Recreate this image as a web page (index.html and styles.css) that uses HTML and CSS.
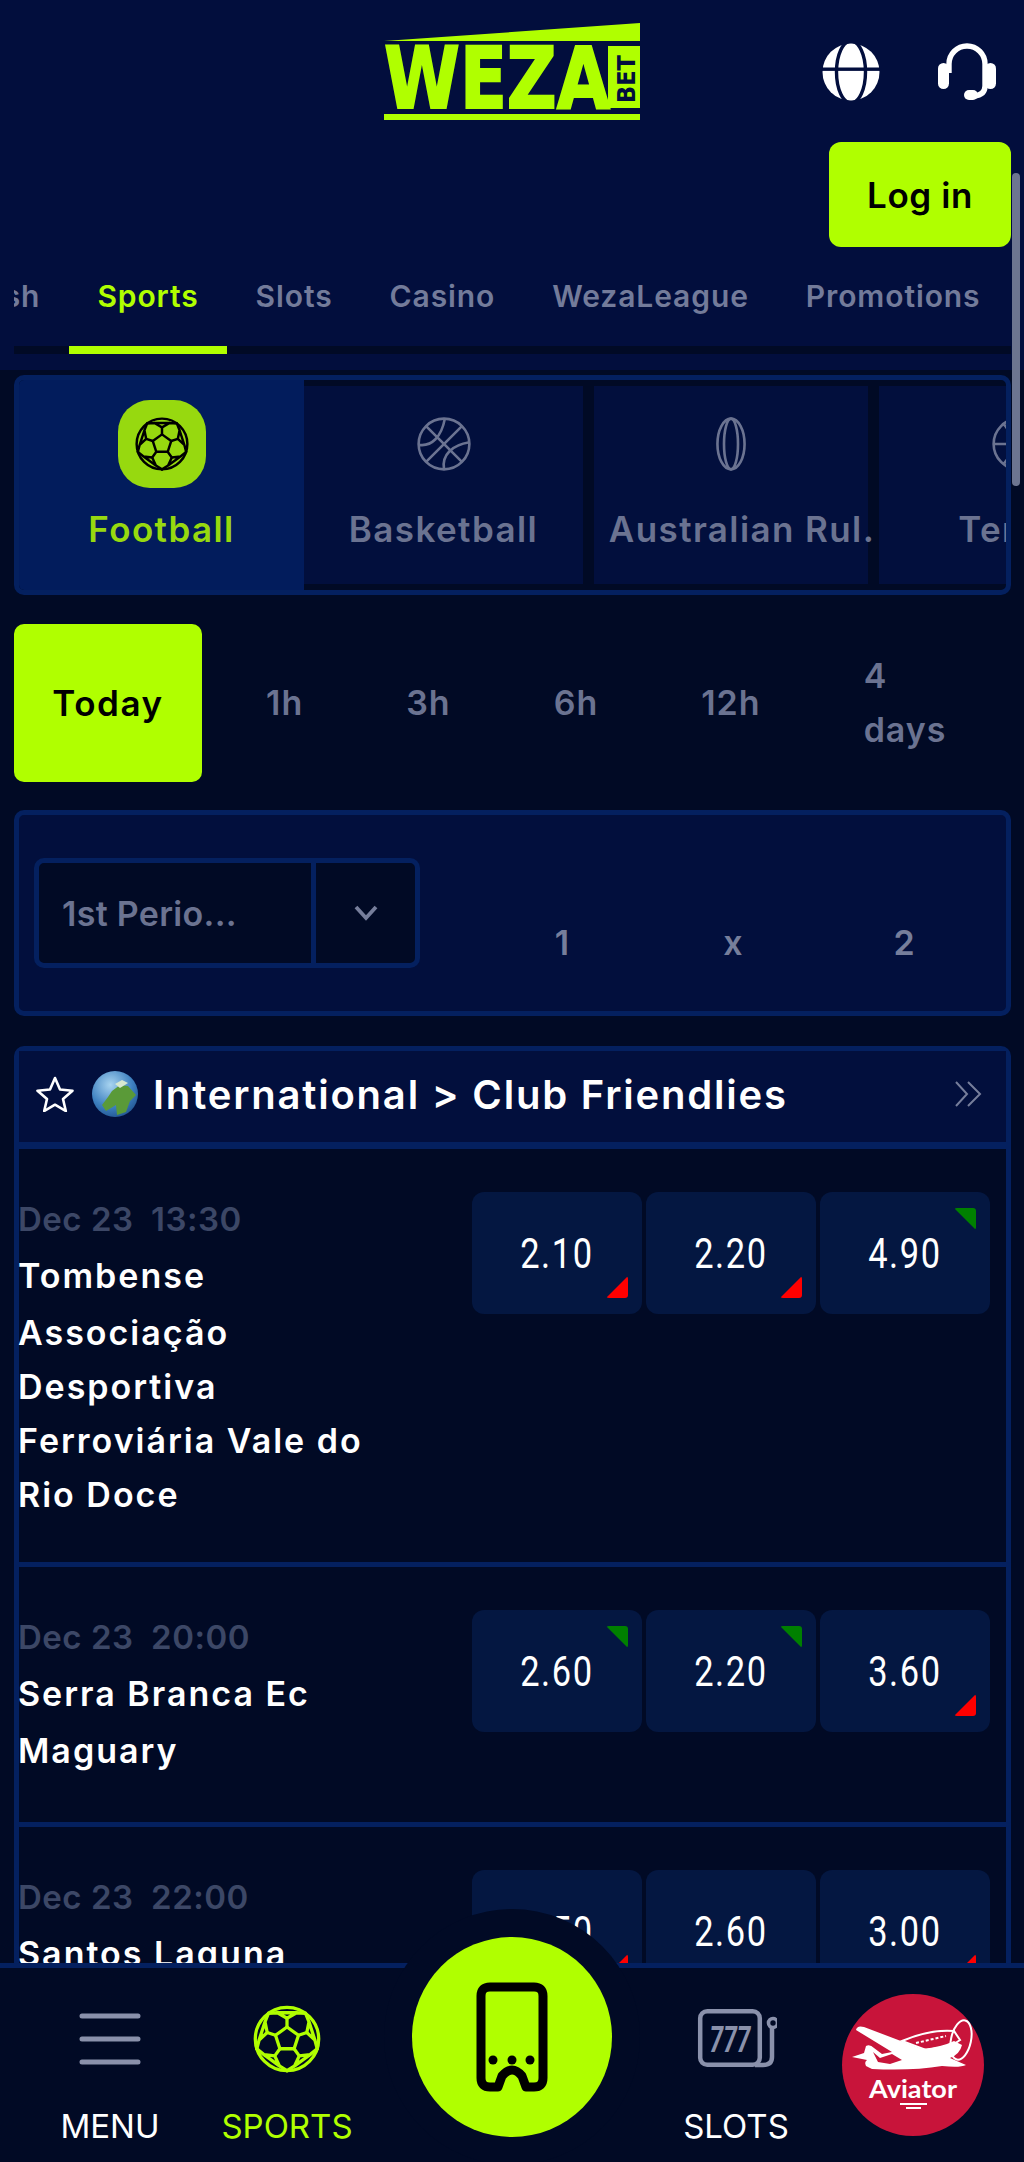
FILE: index.html
```html
<!DOCTYPE html>
<html lang="en">
<head>
  <meta charset="utf-8">
  <title>WezaBet</title>
  <link rel="stylesheet" href="styles.css">
</head>
<body>
<svg class="defs" width="0" height="0" aria-hidden="true">
  <symbol id="ball" viewBox="0 0 64 64">
    <g fill="none" stroke="currentColor" stroke-linejoin="round" stroke-linecap="round">
      <circle cx="32" cy="32" r="29"/>
      <path d="M32 21 42.500 28.600 38.500 40.900H25.500L21.500 28.600Z"/>
      <path d="M32 21V13M42.500 28.600 50.100 26.100M38.500 40.900 43.200 47.400M25.500 40.900 20.800 47.400M21.500 28.600 13.900 26.100"/>
      <path d="M23.300 8 32 13 40.700 8M15 8.500 23.300 8H40.700L49 8.500"/>
      <path d="M52.100 16.300 50.100 26.100 57.500 32.900M49 8.500 52.100 16.300 57.500 32.900 59.600 41"/>
      <path d="M53.100 46.300 43.200 47.400 39 56.500M59.600 41 53.100 46.300 39 56.500 32 61"/>
      <path d="M25 56.500 20.800 47.400 10.900 46.300M32 61 25 56.500 10.900 46.300 4.400 41"/>
      <path d="M6.500 32.900 13.900 26.100 11.900 16.300M4.400 41 6.500 32.900 11.900 16.300 15 8.500"/>
    </g>
  </symbol>
</svg>

<div class="app">
  <header class="topbar">
    <div class="top-row">
      <span></span>
      <svg class="logo" viewBox="0 0 256 97">
        <polygon points="0,18 256,0 256,18" fill="#b0ff00"/>
        <rect y="91" width="256" height="6" fill="#b0ff00"/>
        <rect x="224" y="23" width="32" height="62" fill="#b0ff00"/>
        <text x="0" y="85" class="logo-word" textLength="226" lengthAdjust="spacingAndGlyphs">WEZA</text>
        <text transform="translate(251 80) rotate(-90)" class="logo-bet" textLength="48" lengthAdjust="spacingAndGlyphs">BET</text>
      </svg>
      <div class="top-icons">
        <svg class="top-icon" viewBox="0 0 58 58">
          <circle cx="29" cy="29" r="28.500" fill="#fff"/>
          <ellipse cx="29" cy="29" rx="14.500" ry="31" fill="none" stroke="#020e3d" stroke-width="3.400"/>
          <rect x="0" y="24.500" width="58" height="3.400" fill="#020e3d"/>
        </svg>
        <svg class="top-icon" viewBox="0 0 58 58">
          <path d="M11 30V21a18 18 0 0 1 36 0v22q0 9-11 10" fill="none" stroke="#fff" stroke-width="5.400"/>
          <rect x="0" y="20" width="11" height="26" rx="5.500" fill="#fff"/>
          <rect x="47" y="20" width="11" height="26" rx="5.500" fill="#fff"/>
          <rect x="26" y="47" width="14" height="10" rx="5" fill="#fff"/>
        </svg>
      </div>
    </div>
    <div class="login-row"><a class="login-btn">Log in</a></div>
    <nav class="tabs">
      <a class="tab">Crash</a>
      <a class="tab tab-active">Sports</a>
      <a class="tab">Slots</a>
      <a class="tab">Casino</a>
      <a class="tab">WezaLeague</a>
      <a class="tab">Promotions</a>
    </nav>
  </header>

  <main class="content">
    <section class="sports">
      <div class="sport sport-active">
        <span class="sport-tile"><svg class="sport-icon"><use href="#ball"/></svg></span>
        <span class="sport-name">Football</span>
      </div>
      <div class="sport">
        <svg class="sport-icon" viewBox="0 0 64 64">
          <g fill="none" stroke="currentColor" stroke-width="3">
            <circle cx="32" cy="32" r="29"/>
            <path d="M52.500 11.500 11.500 52.500M11.500 11.500 52.500 52.500M3.500 33C18 35 29 24 33 3M32 61C29 44 42 33 61 30"/>
          </g>
        </svg>
        <span class="sport-name">Basketball</span>
      </div>
      <div class="sport sport-long">
        <svg class="sport-icon" viewBox="0 0 64 64">
          <g fill="none" stroke="currentColor" stroke-width="3">
            <ellipse cx="32" cy="32" rx="15.500" ry="29"/>
            <ellipse cx="32" cy="32" rx="8" ry="29"/>
          </g>
        </svg>
        <span class="sport-name">Australian Rul.</span>
      </div>
      <div class="sport">
        <svg class="sport-icon" viewBox="0 0 64 64">
          <g fill="none" stroke="currentColor" stroke-width="3">
            <circle cx="32" cy="32" r="29"/>
            <path d="M3 32H61M14 9C26 20 26 44 14 55M50 9C38 20 38 44 50 55"/>
          </g>
        </svg>
        <span class="sport-name">Tennis</span>
      </div>
    </section>

    <section class="ranges">
      <a class="range range-active">Today</a>
      <a class="range">1h</a>
      <a class="range">3h</a>
      <a class="range">6h</a>
      <a class="range">12h</a>
      <a class="range">4<br>days</a>
    </section>

    <section class="filter">
      <div class="select">
        <span class="select-value">1st Perio...</span>
        <span class="select-arrow">
          <svg width="28" height="18" viewBox="0 0 28 18"><path d="M4 3 14 14 24 3" fill="none" stroke="#767e9b" stroke-width="3.800"/></svg>
        </span>
      </div>
      <div class="odds-head">
        <span>1</span><span>x</span><span>2</span>
      </div>
    </section>

    <section class="league">
      <header class="league-head">
        <svg class="star" viewBox="0 0 38 36"><path d="M19 2 24 13.500 36.500 14.700 27 23 29.800 35 19 28.700 8.200 35 11 23 1.500 14.700 14 13.500Z" fill="none" stroke="#fff" stroke-width="2.600" stroke-linejoin="round"/></svg>
        <svg class="earth" viewBox="0 0 46 46">
          <defs>
            <radialGradient id="sea" cx="0.4" cy="0.3" r="0.8"><stop offset="0" stop-color="#a8d4f0"/><stop offset="0.6" stop-color="#3d80c0"/><stop offset="1" stop-color="#1d4d88"/></radialGradient>
          </defs>
          <circle cx="23" cy="23" r="23" fill="url(#sea)"/>
          <path d="M20 20 28 14 36 15 44 24 38 30 34 41 25 44 24 34 14 40 10 34 16 26Z" fill="#5a9a38"/>
          <path d="M23 13 30 9 36 12 28 17Z" fill="#d8e8d0"/>
        </svg>
        <h2 class="league-title">International &gt; Club Friendlies</h2>
        <svg class="more" viewBox="0 0 28 26"><path d="M2 1 13 13 2 25M14 1 26 13 14 25" fill="none" stroke="#767e9b" stroke-width="2"/></svg>
      </header>

      <article class="match">
        <div class="match-info">
          <p class="match-time">Dec 23&nbsp;&nbsp;13:30</p>
          <p class="team">Tombense</p>
          <p class="team">Associação Desportiva Ferroviária Vale do Rio Doce</p>
        </div>
        <div class="odds">
          <a class="odd odd-down"><span class="odd-value">2.10</span></a>
          <a class="odd odd-down"><span class="odd-value">2.20</span></a>
          <a class="odd odd-up"><span class="odd-value">4.90</span></a>
        </div>
      </article>

      <article class="match">
        <div class="match-info">
          <p class="match-time">Dec 23&nbsp;&nbsp;20:00</p>
          <p class="team">Serra Branca Ec</p>
          <p class="team">Maguary</p>
        </div>
        <div class="odds">
          <a class="odd odd-up"><span class="odd-value">2.60</span></a>
          <a class="odd odd-up"><span class="odd-value">2.20</span></a>
          <a class="odd odd-down"><span class="odd-value">3.60</span></a>
        </div>
      </article>

      <article class="match">
        <div class="match-info">
          <p class="match-time">Dec 23&nbsp;&nbsp;22:00</p>
          <p class="team">Santos Laguna</p>
        </div>
        <div class="odds">
          <a class="odd odd-down"><span class="odd-value">2.50</span></a>
          <a class="odd"><span class="odd-value">2.60</span></a>
          <a class="odd odd-down"><span class="odd-value">3.00</span></a>
        </div>
      </article>
    </section>
  </main>

  <footer class="bottom-nav">
    <a class="nav-item">
      <span class="nav-icon">
        <svg width="62" height="52" viewBox="0 0 62 52"><path d="M3 3H59M3 26H59M3 49H59" stroke="#8a91ab" stroke-width="5" stroke-linecap="round"/></svg>
      </span>
      <span class="nav-label">MENU</span>
    </a>
    <a class="nav-item nav-item-active">
      <span class="nav-icon"><svg class="nav-ball"><use href="#ball"/></svg></span>
      <span class="nav-label">SPORTS</span>
    </a>
    <a class="center-btn">
      <svg width="72" height="110" viewBox="0 0 72 110">
        <path d="M14 5H58Q67 5 67 14V96Q67 105 58 105H50L46 94Q36 82 26 94L22 105H14Q5 105 5 96V14Q5 5 14 5Z" fill="none" stroke="#000" stroke-width="9" stroke-linejoin="round"/>
        <circle cx="17" cy="78" r="4.500"/><circle cx="36" cy="78" r="4.500"/><circle cx="54" cy="78" r="4.500"/>
      </svg>
    </a>
    <a class="nav-item">
      <span class="nav-icon">
        <svg width="82" height="62" viewBox="0 0 82 62">
          <rect x="5.200" y="3.200" width="59.600" height="53.600" rx="7" fill="none" stroke="#8a91ab" stroke-width="4.500"/>
          <path d="M77 20V49Q77 57 68 57H60" fill="none" stroke="#8a91ab" stroke-width="4.500"/>
          <circle cx="78" cy="15" r="4.500" fill="none" stroke="#8a91ab" stroke-width="3.600"/>
          <text x="35" y="44" class="slot-digits" text-anchor="middle" textLength="41" lengthAdjust="spacingAndGlyphs">777</text>
        </svg>
      </span>
      <span class="nav-label">SLOTS</span>
    </a>
    <a class="aviator">
      <svg width="142" height="142" viewBox="0 0 142 142">
        <circle cx="71" cy="71" r="71" fill="#c8143a"/>
        <path d="M60 47Q88 35 112 37L118 46 112 50Q100 54 84 56Z" fill="none" stroke="#fff" stroke-width="2"/>
        <path d="M74 49 104 42" stroke="#fff" stroke-width="2" stroke-dasharray="3 2"/>
        <path d="M14 36Q15 31 22 33L80 55Q100 53 112 47L120 51Q118 60 108 64L124 71Q118 74 100 72Q70 77 30 75L24 72Q22 68 25 66L10 63 22 59 24 52Q28 50 32 54L40 60 50 58Z" fill="#fff"/>
        <path d="M31 58 38 64 50 60 60 66 48 70 36 68Z" fill="#c8143a"/>
        <ellipse cx="119" cy="46" rx="10" ry="20" transform="rotate(12 119 46)" fill="none" stroke="#fff" stroke-width="2"/>
        <text x="71" y="104" class="aviator-word" text-anchor="middle" textLength="88" lengthAdjust="spacingAndGlyphs">Aviator</text>
        <path d="M58 110H85M64 114H79" stroke="#fff" stroke-width="1.800"/>
      </svg>
    </a>
  </footer>

  <div class="scrollbar"></div>
</div>
</body>
</html>
```

FILE: styles.css
```css
* {box-sizing: border-box;}
html, body {margin: 0; height: 100%;}
body {background: #010a25; color: #fff; font-family: Inter, "Noto Sans", sans-serif;}
a {display: block;}
p, h2 {margin: 0;}
.defs {position: absolute;}

.app {position: relative; height: 100vh; display: flex; flex-direction: column; overflow: hidden;}

/* header */
.topbar {flex: none; background: #020e3d; padding-bottom: 16px;}
.top-row {height: 142px; padding-top: 23px; display: grid; grid-template-columns: 1fr 256px 1fr; align-items: start;}
.logo {width: 256px; height: 97px; display: block;}
.logo-word {font-family: "DejaVu Sans", sans-serif; font-weight: bold; font-size: 85px; fill: #b0ff00; stroke: #b0ff00; stroke-width: 2px;}
.logo-bet {font-family: "DejaVu Sans", sans-serif; font-weight: bold; font-size: 25px; fill: #020e3d;}
.top-icons {display: flex; justify-content: flex-end; gap: 58px; margin: 20px 28px 0 0;}
.top-icon {width: 58px; height: 58px; display: block;}
.login-row {display: flex; justify-content: flex-end; padding-right: 13px;}
.login-btn {width: 182px; height: 105px; background: #b0ff00; color: #000; border-radius: 12px; font-size: 35px; font-weight: 600; letter-spacing: 0.6px; display: flex; align-items: center; justify-content: center;}
.tabs {margin: 0 13px 0 14px; padding-right: 2px; height: 107px; display: flex; justify-content: flex-end; overflow: hidden; box-shadow: inset 0 -8px 0 #010a25;}
.tab {flex: none; padding: 31px 28.5px 0; border-bottom: 8px solid transparent; color: #737b9a; font-size: 30px; font-weight: 600; letter-spacing: 0.9px;}
.tab-active {color: #b0ff00; border-bottom-color: #b0ff00;}

/* main list */
.content {flex: 1; min-height: 0; overflow: hidden; padding: 5px 13px 0 14px;}

.sports {height: 220px; display: flex; gap: 11px; overflow: hidden; background: #010a25; border: 5px solid #04205f; border-radius: 10px;}
.sport {flex: none; width: 279px; margin: 6px 0; background: #020f3d; color: #6b7391; display: flex; flex-direction: column; align-items: center; white-space: nowrap;}
.sport-active {width: 285px; margin: 0 -11px 0 0; background: #021c5c; color: #97d90f;}
.sport-long {width: 274px;}
.sport-long .sport-name {margin-left: 22px;}
.sport-icon {width: 56px; height: 56px; margin-top: 30px; display: block;}
.sport-tile {margin-top: 20px; width: 88px; height: 88px; border-radius: 32px; background: #97d90f; color: #000; display: flex; align-items: center; justify-content: center; stroke-width: 2.8;}
.sport-tile .sport-icon {margin: 0;}
.sport-name {margin-top: 32px; font-size: 35px; font-weight: 600; letter-spacing: 1.4px; line-height: 50px;}
.sport-active .sport-name {margin-top: 16px;}

.ranges {margin-top: 29px; height: 158px; display: flex; gap: 25px; color: #6b7391;}
.range {flex: none; padding: 0 39px; font-size: 34px; font-weight: 600; letter-spacing: 1px; line-height: 54px; display: flex; align-items: center;}
.range:last-child {flex: 1; padding-right: 0;}
.range-active {background: #b0ff00; color: #000; border-radius: 10px; width: 188px; justify-content: center; padding: 0; font-size: 35px; letter-spacing: 1.6px;}

.filter {margin-top: 28px; height: 206px; padding: 43px 16px 0 15px; display: flex; justify-content: space-between; background: #020f3d; border: 5px solid #04205f; border-radius: 10px;}
.select {width: 386px; height: 110px; display: flex; background: #010a25; border: 5px solid #04205f; border-radius: 10px; color: #6b7391;}
.select-value {flex: 1; padding-left: 23px; font-size: 34px; font-weight: 600; letter-spacing: 0.3px; display: flex; align-items: center; border-right: 5px solid #04205f;}
.select-arrow {width: 99px; flex: none; display: flex; align-items: center; justify-content: center;}
.odds-head {width: 518px; display: grid; grid-template-columns: repeat(3, 171px); text-align: center; padding: 64px 0 0 4.5px; color: #767e9b; font-size: 34px; font-weight: 600;}

.league {margin-top: 30px; border: solid #04205f; border-width: 5px 5px 0; border-radius: 10px 10px 0 0;}
.league-head {height: 98px; padding: 0 24px 5px 17px; display: flex; align-items: center; background: #020f3d; border-bottom: 7px solid #04205f;}
.star {width: 38px; height: 36px; flex: none;}
.earth {width: 46px; height: 46px; margin-left: 18px; flex: none;}
.league-title {margin-left: 15px; flex: 1; font-size: 40px; font-weight: 600; letter-spacing: 1.8px; white-space: nowrap;}
.more {width: 28px; height: 26px; flex: none;}

.match {display: flex; justify-content: space-between; padding: 43px 16px 44px 0; border-bottom: 5px solid #04205f;}
.league-head + .match {padding-bottom: 40px;}
.match-info {width: 370px; margin-left: -1px;}
.match-time {color: #3c4766; font-size: 33px; font-weight: 600; letter-spacing: 0.5px; line-height: 54px; white-space: nowrap;}
.team {margin-top: 3px; font-size: 34px; font-weight: 600; line-height: 54px; letter-spacing: 2px;}
.odds {flex: none; width: 518px; height: 122px; display: grid; grid-template-columns: repeat(3, 170px); grid-template-rows: 122px; gap: 4px;}
.odd {position: relative; background: #041741; border-radius: 12px; display: flex; align-items: center; justify-content: center;}
.odd-value {font-family: Roboto, sans-serif; font-weight: 400; font-size: 43px; letter-spacing: 2px; transform: scaleX(0.8);}
.odd-down::after, .odd-up::after {content: ""; position: absolute; right: 14px; width: 22px; height: 22px; border-radius: 3px;}
.odd-down::after {bottom: 16px; background: #f00; clip-path: polygon(100% 0, 100% 100%, 0 100%);}
.odd-up::after {top: 16px; background: #008000; clip-path: polygon(0 0, 100% 0, 100% 100%);}

/* bottom bar */
.bottom-nav {flex: none; position: relative; height: 199px; display: grid; grid-template-columns: 220px 134px 316px 132px 222px; background: #010a25; border-top: 5px solid #04205f;}
.nav-item {display: flex; flex-direction: column; align-items: center; color: #fff; white-space: nowrap;}
.nav-item-active {color: #b0ff00;}
.nav-icon {height: 70px; margin-top: 36px; display: flex; align-items: center; justify-content: center;}
.nav-ball {width: 70px; height: 70px; display: block; stroke-width: 3;}
.nav-label {margin-top: 32px; font-size: 33px; line-height: 40px;}
.center-btn {justify-self: center; margin-top: -31px; width: 200px; height: 200px; border-radius: 50%; background: #b0ff00; box-shadow: 0 0 0 28px #010a25; display: flex; align-items: center; justify-content: center;}
.slot-digits {font-family: Roboto, sans-serif; font-style: italic; font-weight: 700; font-size: 36px; fill: #8a91ab;}
.aviator {justify-self: center; margin-top: 26px; width: 142px; height: 142px;}
.aviator svg {display: block;}
.aviator-word {font-family: Lato, sans-serif; font-weight: 700; font-size: 24px; fill: #fff;}

.scrollbar {position: absolute; top: 173px; right: 4px; width: 8px; height: 313px; border-radius: 4px; background: #6d7590;}
```
